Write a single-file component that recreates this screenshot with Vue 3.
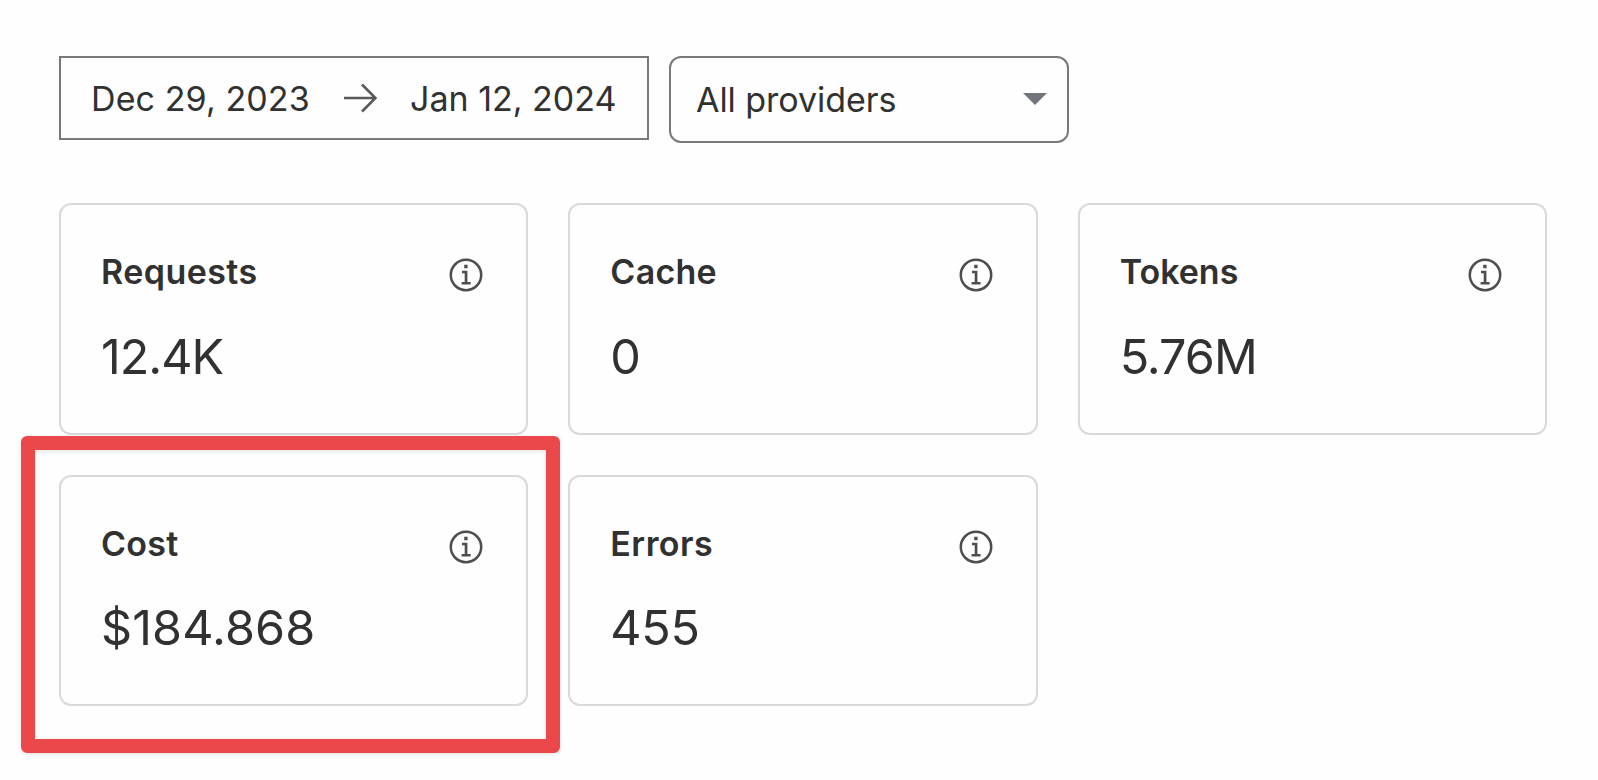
<script setup>
import { ref } from 'vue';

const range = ref({ from: 'Dec 29, 2023', to: 'Jan 12, 2024' });
const provider = ref('All providers');

const stats = [
  { id: 'requests', title: 'Requests', value: '12.4K' },
  { id: 'cache', title: 'Cache', value: '0' },
  { id: 'tokens', title: 'Tokens', value: '5.76M' },
  { id: 'cost', title: 'Cost', value: '$184.868', highlighted: true },
  { id: 'errors', title: 'Errors', value: '455' }
];
</script>

<template>
  <main class="analytics">
    <div class="filters">
      <div class="date-range">
        <span class="from">{{ range.from }}</span>
        <svg class="arrow" width="34" height="30" viewBox="0 0 34 30">
          <path d="M1 15H32.5M19 1.5L32.5 15L19 28.5" />
        </svg>
        <span class="to">{{ range.to }}</span>
      </div>
      <button class="provider" type="button">
        <span>{{ provider }}</span>
        <svg class="caret" width="24" height="12" viewBox="0 0 24 12">
          <path d="M0 0H24L12 12Z" />
        </svg>
      </button>
    </div>

    <div class="stats">
      <section v-for="stat in stats" :key="stat.id" class="card" :class="stat.id">
        <header>
          <h2>{{ stat.title }}</h2>
          <svg class="info" width="34" height="34" viewBox="0 0 34 34">
            <circle cx="17" cy="17" r="15.2" />
            <path d="M15.2 6.8H18.6V10.2H15.2ZM13 12.8H18.4V24H21.6V26.6H12.6V24H15.7V15.3H13Z" />
          </svg>
        </header>
        <div class="value">{{ stat.value }}</div>
        <div v-if="stat.highlighted" class="highlight"></div>
      </section>
    </div>
  </main>
</template>

<style>
body {
  margin: 0;
  background: #fefefe;
}
</style>

<style scoped>
.analytics {
  box-sizing: border-box;
  height: 780px;
  padding: 56px 51px 0 59px;
  font-family: Inter, "Liberation Sans", sans-serif;
  color: #313131;
  overflow: hidden;
}
.filters {
  display: flex;
  align-items: flex-start;
  gap: 20px;
  height: 147px;
}
.date-range,
.provider {
  box-sizing: border-box;
  display: flex;
  align-items: center;
  border: 2px solid #797979;
  font-size: 34px;
  line-height: 40px;
  white-space: nowrap;
}
.date-range {
  width: 590px;
  height: 84px;
  padding-left: 30px;
}
.from,
.to {
  padding-top: 2px;
}
.from {
  width: 252px;
  letter-spacing: 0.1px;
}
.to {
  margin-left: 33px;
}
.arrow {
  flex: none;
  fill: none;
  stroke: #595959;
  stroke-width: 2.6;
}
.provider {
  justify-content: space-between;
  width: 400px;
  height: 87px;
  padding: 0 20px 0 25px;
  border-radius: 12px;
  background: none;
  font-family: inherit;
  letter-spacing: -0.05px;
  color: inherit;
}
.caret {
  fill: #72757b;
  margin-top: -2px;
}
.stats {
  display: grid;
  grid-template-columns: repeat(3, 1fr);
  grid-auto-rows: 231.5px;
  gap: 40px;
}
.card {
  position: relative;
  box-sizing: border-box;
  padding: 47px 43px 0 40px;
  border: 2px solid #d9d9d9;
  border-radius: 12px;
}
.card header {
  display: flex;
  justify-content: space-between;
}
.card h2 {
  margin: 0;
  font-size: 34px;
  font-weight: 600;
  line-height: 40px;
}
.requests h2,
.errors h2 {
  letter-spacing: 0.45px;
}
.cache h2,
.cost h2 {
  letter-spacing: 0.25px;
}
.info {
  margin-top: 6px;
  stroke: none;
  fill: #4e4e4e;
}
.info circle {
  fill: none;
  stroke: #4e4e4e;
  stroke-width: 2.5;
}
.value {
  margin-top: 34.5px;
  font-size: 48.5px;
  line-height: 60px;
}
.requests .value,
.tokens .value {
  letter-spacing: -1px;
}
.cost .value {
  letter-spacing: 0.1px;
}
.errors .value {
  letter-spacing: -0.3px;
}
.highlight {
  position: absolute;
  inset: -41px -34px -49px -40px;
  border: 14px solid #ea484a;
  border-radius: 6px;
  box-shadow: 0 1px 4px rgba(0, 0, 0, 0.12), inset 0 1px 4px rgba(0, 0, 0, 0.12);
}
</style>
